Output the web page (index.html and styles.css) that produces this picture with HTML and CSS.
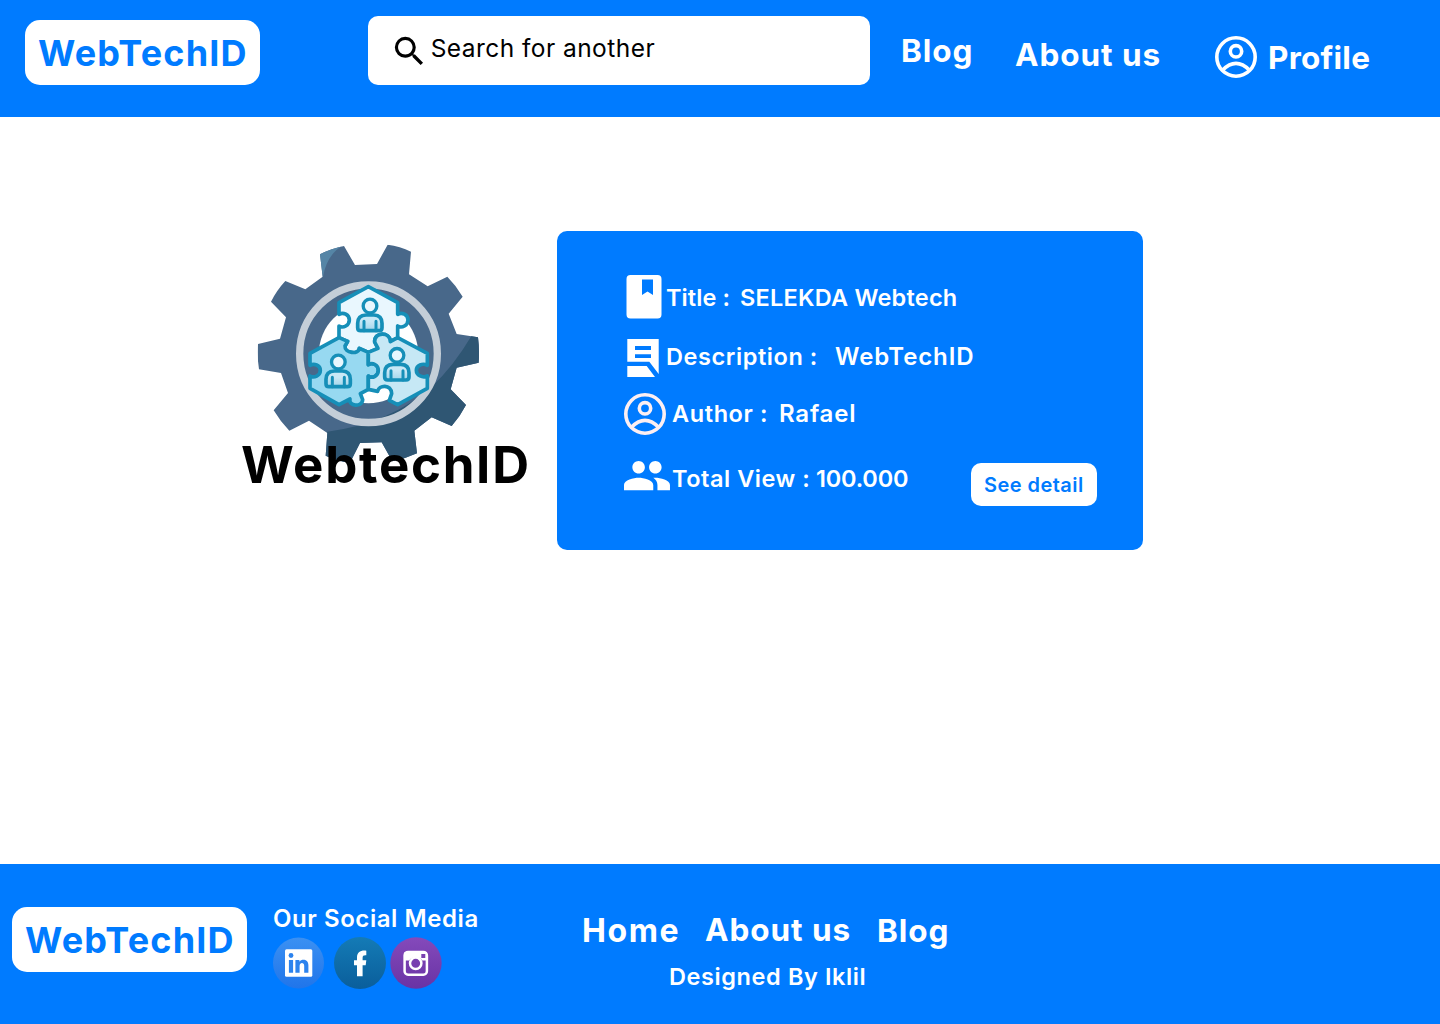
FILE: index.html
```html
<!DOCTYPE html>
<html lang="en">
<head>
<meta charset="utf-8">
<title>WebTechID</title>
<link rel="stylesheet" href="styles.css">
</head>
<body>
<header class="header">
  <a class="brand">WebTechID</a>
  <div class="search">
    <svg class="search-icon" viewBox="0 0 24 24"><path d="M15.5 14h-.79l-.28-.27A6.47 6.47 0 0 0 16 9.5 6.5 6.5 0 1 0 9.5 16c1.61 0 3.09-.59 4.23-1.57l.27.28v.79l5 4.99L20.49 19l-4.99-5zm-6 0C7.01 14 5 11.99 5 9.5S7.01 5 9.5 5 14 7.01 14 9.5 11.99 14 9.5 14z"/></svg>
    <span class="search-text">Search for another</span>
  </div>
  <a class="link blog">Blog</a>
  <a class="link about">About us</a>
  <a class="profile">
    <svg class="user-icon" viewBox="0 0 42 42"><circle cx="21" cy="21" r="19.2"/><circle cx="21" cy="15.3" r="5.7"/><path d="M7.500 34.200Q21 20.500 34.500 34.200"/></svg>
    <span class="link profile-text">Profile</span>
  </a>
</header>

<main class="main">
  <figure class="emblem">
    <svg class="gear" viewBox="0 0 900 780">
      <defs>
        <clipPath id="gear-shape"><path d="M240 58Q275 40 312 33L345 90 411 87 443 29Q480 34 513 50L507 118 563 154 622 125Q648 151 668 185L626 236 650 297 714 307Q719 345 716 383L650 398 632 463 678 510Q661 543 635 573L575 547 523 587 531 655Q497 671 457 679L425 622 360 624 330 683Q292 679 257 662L262 594 207 557 148 587Q121 560 101 526L144 474 123 414 57 403Q51 365 54 327L120 311 138 247 93 200Q110 166 136 138L196 163 248 125Z"/></clipPath>
        <linearGradient id="torso-fill" x2="0" y2="1"><stop offset=".4" stop-color="#c8e8f6"/><stop offset="1" stop-color="#a3d5ea"/></linearGradient>
        <g id="person">
          <circle cx="240" cy="108" r="20.500" class="head"/>
          <path d="M228 135H252Q276 136 276 160V173Q276 182 267 182H212Q203 182 203 173V160Q203 136 228 135Z" class="torso"/>
          <path d="M222 154V182M258 154V182" class="arms"/>
        </g>
      </defs>
      <g clip-path="url(#gear-shape)">
        <path d="M0 0H900V780H0Z" fill="#48688a"/>
        <path d="M235 30H312Q262 55 249 125H235Z" fill="#5585a6"/>
        <path d="M696 300Q640 395 575 455Q450 565 262 590L230 700H740V300Z" fill="#2f5673"/>
      </g>
      <circle cx="385.500" cy="356" r="149" fill="#fff"/>
      <circle cx="385.500" cy="356" r="206.500" fill="none" stroke="#c4ced8" stroke-width="22"/>
      <g class="pieces" transform="translate(150 105)">
        <path fill="#e9f7fe" d="M235 50L323 98V133C336 125 354 134 354 150S336 176 323 168V203L301 215C300 184 252 185 254 216L264 235 235 247 208 235C206 255 163 250 165 228L173 214 147 203V168C160 176 178 166 178 150S160 125 147 133V98Z"/>
        <path fill="#97d9f1" d="M147 203L60 250V286C72 279 91 285 91 301S72 325 60 318V355L147 404 180 387C174 409 217 413 218 389L211 371 235 358V318C248 327 265 317 265 301S248 276 235 284V247L208 235C206 255 163 250 165 228L173 214Z"/>
        <path fill="#c6e8f5" d="M323 203L412 250V286C398 278 379 286 379 301S398 325 412 318V355L323 404 298 391 305 371C304 341 266 345 263 364L235 358V318C248 327 265 317 265 301S248 276 235 284V247L264 235 254 216C252 185 300 184 301 215Z"/>
        <use href="#person"/>
        <use href="#person" x="-95" y="168"/>
        <use href="#person" x="81" y="148"/>
      </g>
    </svg>
    <figcaption class="emblem-name">WebtechID</figcaption>
  </figure>

  <section class="card">
    <div class="row row-title">
      <svg class="icon" viewBox="0 0 43 48"><path fill-rule="evenodd" d="M8.500 1H35.500Q39.500 1 39.500 5V40.500Q39.500 44.500 35.500 44.500H8.500Q4.500 44.500 4.500 40.500V5Q4.500 1 8.500 1ZM20 5.500V21L25.500 17.500 31 21V5.500Z"/></svg>
      <span class="label l1">Title :</span><span class="v1">SELEKDA Webtech</span>
    </div>
    <div class="row row-desc">
      <svg class="icon" viewBox="0 0 43 48"><path fill-rule="evenodd" d="M5.300 6H36.700V41L27.300 28.700H5.300ZM13 13V17H29V13ZM13 21.300V25H29V21.300ZM5.300 33H24.700L33 44H5.300Z"/></svg>
      <span class="label l2">Description :</span><span class="v2">WebTechID</span>
    </div>
    <div class="row row-author">
      <svg class="icon wide outline" viewBox="0 0 49 48"><circle cx="23" cy="24" r="19.200"/><circle cx="23" cy="18.300" r="5.700"/><path d="M9.500 37.200Q23 23.500 36.500 37.200"/></svg>
      <span class="label l3">Author :</span><span class="v3">Rafael</span>
    </div>
    <div class="row row-views">
      <svg class="icon wide" viewBox="0 0 49 48"><path transform="translate(-.090 -4.450) scale(2.090)" d="M16 11c1.660 0 2.990-1.340 2.990-3S17.660 5 16 5s-3 1.340-3 3 1.340 3 3 3zm-8 0c1.660 0 2.990-1.340 2.990-3S9.660 5 8 5 5 6.340 5 8s1.340 3 3 3zm0 2c-2.330 0-7 1.170-7 3.500V19h14v-2.500c0-2.330-4.670-3.500-7-3.500zm8 0c-.290 0-.620.020-.970.050 1.160.840 1.970 1.970 1.970 3.450V19h6v-2.500c0-2.330-4.670-3.500-7-3.500z"/></svg>
      <span class="label l4">Total View :</span><span class="v4">100.000</span>
      <a class="detail">See detail</a>
    </div>
  </section>
</main>

<footer class="footer">
  <a class="brand">WebTechID</a>
  <div class="social">
    <p class="social-title">Our Social Media</p>
    <div class="social-icons">
      <svg viewBox="0 0 52 52"><defs><linearGradient id="gi" x2="0" y2="1"><stop stop-color="#3b90f2"/><stop offset="1" stop-color="#2075ea"/></linearGradient></defs><circle cx="25.500" cy="26" r="25.500" fill="url(#gi)"/><rect x="12" y="12.300" width="27.300" height="27.500" rx="1.500" fill="#fff"/><g fill="#2c83ee"><circle cx="18" cy="18.500" r="2.400"/><path d="M15.900 23H20.100V35.700H15.900ZM22.400 23H26.400V24.800C28.900 21.500 35.400 22.300 35.400 28.300V35.700H31.200V29C31.200 25 26.600 25.300 26.600 29V35.700H22.400Z"/></g></svg>
      <svg class="fb" viewBox="0 0 52 52"><defs><linearGradient id="gf" x2="0" y2="1"><stop stop-color="#147bb6"/><stop offset="1" stop-color="#0a5e9b"/></linearGradient></defs><circle cx="26" cy="26" r="26" fill="url(#gf)"/><path fill="#fff" d="M23 39.300V28.200H20V23.300H23V20.500C23 15.500 26.500 13 32.300 13.700V18.200C29.500 18 28.600 18.600 28.600 21V23.300H32.300L31.700 28.200H28.600V39.300Z"/></svg>
      <svg class="ig" viewBox="0 0 52 52"><defs><linearGradient id="gg" x2="0" y2="1"><stop stop-color="#844abb"/><stop offset="1" stop-color="#6933a4"/></linearGradient></defs><circle cx="26" cy="26" r="25.700" fill="url(#gg)"/><rect x="14.600" y="14.900" width="22.300" height="22.800" rx="3.500" fill="none" stroke="#fff" stroke-width="2.500"/><path fill="#fff" d="M14.500 15H37V23.500H32.300A8 8 0 0 0 19.200 23.500H14.500Z"/><circle cx="25.700" cy="26.300" r="5.700" fill="#7840b0" stroke="#fff" stroke-width="2.500"/><path fill="#7840b0" d="M31.300 17H35.300V21H31.300Z"/></svg>
    </div>
  </div>
  <div class="foot-nav">
    <nav class="foot-links">
      <a class="link home">Home</a><a class="link fabout">About us</a><a class="link fblog">Blog</a>
    </nav>
    <p class="credit">Designed By Iklil</p>
  </div>
</footer>
</body>
</html>
```
FILE: styles.css
```css
* { box-sizing: border-box; }
body {
  margin: 0;
  width: 1440px;
  height: 1024px;
  display: flex;
  flex-direction: column;
  overflow: hidden;
  background: #fff;
  color: #fff;
  font-family: Inter, sans-serif;
  font-weight: 600;
  white-space: nowrap;
}
p, figure { margin: 0; }
svg { display: block; flex: none; }

.header {
  height: 117px;
  padding-left: 25px;
  display: flex;
  align-items: flex-start;
  background: #007bff;
}
.brand {
  flex: none;
  width: 235px;
  height: 65px;
  padding-left: 13px;
  border-radius: 15px;
  background: #fff;
  color: #007bff;
  font-size: 36px;
  font-weight: 650;
  line-height: 66px;
  letter-spacing: 1.150px;
}
.header .brand { margin-top: 20px; }
.search {
  flex: none;
  display: flex;
  width: 502px;
  height: 69px;
  margin: 16px 0 0 108px;
  padding: 16px 0 0 22px;
  border-radius: 10px;
  background: #fff;
  color: #000;
}
.search-icon { width: 38.700px; height: 38.700px; }
.search-text {
  margin-left: 2px;
  font-size: 24.500px;
  font-weight: 400;
  line-height: 32px;
  letter-spacing: .450px;
}
.link { font-size: 31.500px; font-weight: 650; line-height: 48px; letter-spacing: .950px; }
.blog { width: 71px; margin: 27px 0 0 31px; }
.about { width: 145px; margin: 31px 0 0 43px; }
.profile { display: flex; align-items: flex-start; margin: 34px 0 0 55px; }
.user-icon { width: 42px; height: 42px; margin-top: 2px; fill: none; stroke: #fff; stroke-width: 3.600; }
.profile-text { margin-left: 11px; letter-spacing: .250px; }

.main {
  flex: 1;
  display: flex;
  align-items: flex-start;
  padding: 114px 0 0 240px;
}
.emblem { width: 317px; padding-top: 4px; }
.gear { width: 300px; height: 260px; }
.pieces path, .torso, .arms { stroke: #168fb8; stroke-width: 11; stroke-linejoin: round; }
.head { fill: #e9f7fe; stroke: #168fb8; stroke-width: 10; }
.torso { fill: url(#torso-fill); }
.arms { fill: none; stroke-width: 9; stroke-linecap: round; }
.emblem-name {
  margin: -60px 0 0 1px;
  color: #000;
  font-size: 51px;
  font-weight: 650;
  line-height: 60px;
  letter-spacing: 1.700px;
}
.card {
  width: 586px;
  height: 319px;
  padding: 49px 0 0 65px;
  border-radius: 10px;
  background: #007bff;
}
.row { display: flex; height: 36px; font-size: 23.500px; line-height: 36px; }
.row-desc { margin-top: 23px; }
.row-author { margin-top: 21px; }
.row-views { margin-top: 29px; }
.icon { width: 43px; height: 48px; margin: -6px 1px 0 0; fill: #fff; }
.icon.wide { width: 49px; }
.icon.outline { fill: none; stroke: #fdeff2; stroke-width: 3.600; }
.l1 { width: 74px; letter-spacing: .100px; }
.v1 { letter-spacing: .230px; }
.l2 { width: 169px; letter-spacing: .580px; }
.v2 { font-size: 24px; letter-spacing: .900px; }
.l3 { width: 107px; letter-spacing: .600px; }
.v3 { font-size: 24px; letter-spacing: .800px; }
.l4 { width: 144px; letter-spacing: .530px; }
.v4 { width: 155px; letter-spacing: -.200px; }
.detail {
  width: 126px;
  height: 43px;
  margin-top: 2px;
  padding-left: 13px;
  border-radius: 10px;
  background: #fff;
  color: #007bff;
  font-size: 20px;
  line-height: 45px;
  letter-spacing: .450px;
}

.footer {
  height: 160px;
  padding-left: 12px;
  display: flex;
  align-items: flex-start;
  background: #007bff;
}
.footer .brand { margin-top: 43px; }
.social { width: 309px; margin: 36px 0 0 26px; }
.social-title { font-size: 24px; line-height: 37px; letter-spacing: .570px; }
.social-icons { display: flex; }
.social-icons svg { width: 52px; height: 52px; }
.social-icons .fb { margin-left: 9px; }
.social-icons .ig { margin-left: 3.500px; }
.foot-nav { padding-top: 42px; }
.foot-links { display: flex; }
.home { width: 123px; margin-top: 1px; font-size: 32px; letter-spacing: 1.600px; }
.fabout { width: 172px; }
.fblog { margin-top: 1px; }
.credit { margin: 4px 0 0 87px; font-size: 23.500px; line-height: 36px; letter-spacing: .600px; }
```
